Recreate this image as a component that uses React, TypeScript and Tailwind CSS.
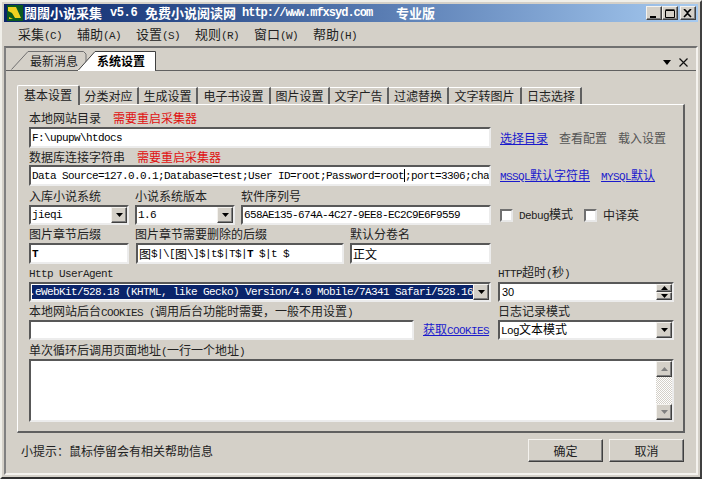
import type { ReactNode } from 'react';

const CJK = "font-['Noto_Sans_CJK_SC','Liberation_Sans',sans-serif]";
const MONO = "font-['Liberation_Mono','Noto_Sans_CJK_SC',monospace]";

/** Half-width Latin text, the 6px advance of the old bitmap font. */
function Lat({ children, className = '' }: { children: ReactNode; className?: string }) {
  return <span className={`${MONO} text-[11px] tracking-[-0.6px] ${className}`}>{children}</span>;
}

function Label({ children, className = '' }: { children: ReactNode; className?: string }) {
  return <div className={`h-4 leading-4 text-[12px] whitespace-nowrap text-[#222] ${className}`}>{children}</div>;
}

/** Sunken Win2k edit box. */
function Field({ children, className = '' }: { children?: ReactNode; className?: string }) {
  return (
    <div
      className={`flex items-center overflow-hidden bg-white border-2 border-t-[#585858] border-l-[#585858] border-r-[#ececec] border-b-[#ececec] pl-[1px] whitespace-nowrap text-[12px] leading-4 text-black ${className}`}
    >
      {children}
    </div>
  );
}

function Raised({ children, className = '' }: { children?: ReactNode; className?: string }) {
  return (
    <div
      className={`flex items-center justify-center bg-[#d4d0c8] border border-t-[#f4f2ee] border-l-[#f4f2ee] border-r-[#404040] border-b-[#404040] shadow-[inset_-1px_-1px_0_#808080] ${className}`}
    >
      {children}
    </div>
  );
}

function Arrow({ up = false, color = '#000' }: { up?: boolean; color?: string }) {
  return (
    <svg width="7" height="4" viewBox="0 0 7 4" className={up ? 'rotate-180' : ''}>
      <path d="M0 0h7L3.5 4z" fill={color} />
    </svg>
  );
}

function Combo({ children, className = '' }: { children?: ReactNode; className?: string }) {
  return (
    <Field className={`justify-between pr-0 ${className}`}>
      <div className="flex-1 min-w-0 overflow-hidden flex items-center">{children}</div>
      <Raised className="w-4 h-4 shrink-0">
        <Arrow />
      </Raised>
    </Field>
  );
}

function Check({ children, className = '' }: { children: ReactNode; className?: string }) {
  return (
    <div className={`flex items-center gap-[6px] text-[12px] whitespace-nowrap text-[#222] ${className}`}>
      <div className="w-[13px] h-[13px] bg-white border-2 border-t-[#707070] border-l-[#707070] border-r-[#e8e8e8] border-b-[#e8e8e8]" />
      {children}
    </div>
  );
}

function CapButton({ kind }: { kind: 'min' | 'max' | 'close' }) {
  return (
    <Raised className="w-4 h-[14px]">
      <svg width="10" height="9" viewBox="0 0 10 9">
        {kind === 'min' && <path d="M1 7h6v2H1z" fill="#000" />}
        {kind === 'max' && <path d="M0.5 1.5h9v7h-9zM0.5 0.8h9" fill="none" stroke="#000" />}
        {kind === 'close' && <path d="M1 0l3.5 3.5L8 0M1 8l3.5-3.5L8 8" fill="none" stroke="#000" strokeWidth="1.6" />}
      </svg>
    </Raised>
  );
}

const MENUS = [
  ['采集', 'C'],
  ['辅助', 'A'],
  ['设置', 'S'],
  ['规则', 'R'],
  ['窗口', 'W'],
  ['帮助', 'H'],
];

const TABS = [
  ['分类对应', 'w-[59px]'],
  ['生成设置', 'w-[59px]'],
  ['电子书设置', 'w-[73px]'],
  ['图片设置', 'w-[59px]'],
  ['文字广告', 'w-[59px]'],
  ['过滤替换', 'w-[60px]'],
  ['文字转图片', 'w-[73px]'],
  ['日志选择', 'w-[60px]'],
];

export default function App() {
  return (
    <div className={`w-[702px] h-[479px] overflow-hidden bg-[#d4d0c8] ${CJK} border-2 border-t-[#f0efe9] border-l-[#f0efe9] border-r-[#404040] border-b-[#303030] p-[2px]`}>
      {/* Title bar */}
      <div className="h-[18px] flex items-center bg-gradient-to-r from-[#0a246a] to-[#a6caf0] pl-[3px] pr-[2px] text-white font-bold text-[13px] whitespace-nowrap">
        <svg width="16" height="16" viewBox="0 0 16 16" className="shrink-0 mr-[1px]">
          <rect width="16" height="16" fill="#0c5a1e" />
          <path d="M1 2h8l5 11H8L5 8 1 6z" fill="#f0d020" />
          <path d="M2 12l4 2H2z" fill="#e8c818" />
        </svg>
        <span className="w-[86px]">闊闊小说采集</span>
        <span className={`${MONO} w-[35px] text-[12px] tracking-[-0.4px]`}>v5.6</span>
        <span className="w-[97px]">免费小说阅读网</span>
        <span className={`${MONO} w-[154px] text-[12px] tracking-[-1px]`}>http://www.mfxsyd.com</span>
        <span>专业版</span>
        <div className="ml-auto flex items-center">
          <CapButton kind="min" />
          <CapButton kind="max" />
          <div className="w-[2px]" />
          <CapButton kind="close" />
        </div>
      </div>

      {/* Menu bar */}
      <div className="h-6 flex items-center pl-[14px] text-[13px] text-[#222]">
        {MENUS.map(([name, key]) => (
          <div key={key} className="w-[59px] whitespace-nowrap">
            {name}
            <Lat>({key})</Lat>
          </div>
        ))}
      </div>

      {/* MDI area */}
      <div className="h-[429px] border-2 border-t-[#707070] border-l-[#808080] border-r-[#f4f2ee] border-b-[#f4f2ee] outline outline-1 outline-[#d4d0c8]">
        {/* Document tabs */}
        <div className="h-[23px] flex items-end border-b border-b-[#606060] pl-[5px] relative">
          <div className="relative w-[67px] h-[19px] text-[12px]">
            <svg width="76" height="19" viewBox="0 0 76 19" className="absolute left-0 top-0">
              <path d="M0.5 18.5L17 0.5H72.5L75 3V15" fill="#d4d0c8" stroke="#707070" />
            </svg>
            <span className="absolute left-[19px] top-[1px] whitespace-nowrap text-[#222]">最新消息</span>
          </div>
          <div className="relative w-[85px] h-[19px] text-[12px] font-bold">
            <svg width="86" height="20" viewBox="0 0 86 20" className="absolute left-0 top-0">
              <path d="M0 19.5L17 0.5H77.5V19.5z" fill="#fff" stroke="#404040" />
              <path d="M0 19.5H77" stroke="#fff" />
            </svg>
            <span className="absolute left-[19px] top-[1px] whitespace-nowrap text-black">系统设置</span>
          </div>
          <div className="absolute right-[8px] top-[10px] flex items-center gap-[8px]">
            <svg width="8" height="5" viewBox="0 0 8 5">
              <path d="M0 0h8L4 5z" fill="#000" />
            </svg>
            <svg width="9" height="9" viewBox="0 0 9 9">
              <path d="M0.5 0.5l8 8M8.5 0.5l-8 8" stroke="#111" strokeWidth="1.2" fill="none" />
            </svg>
          </div>
        </div>

        {/* Tab strip */}
        <div className="h-[33px] pl-[11px] flex items-end text-[12px] text-[#222] relative z-10">
          <div className="w-[63px] h-[20px] -mb-[1px] bg-[#d4d0c8] border-t border-l border-t-white border-l-white border-r-2 border-r-[#606060] rounded-t-[2px] flex items-center justify-center pb-[2px]">
            基本设置
          </div>
          {TABS.map(([name, w]) => (
            <div
              key={name}
              className={`${w} h-[17px] border-t border-t-white border-r-2 border-r-[#606060] flex items-center justify-center whitespace-nowrap`}
            >
              {name}
            </div>
          ))}
        </div>

        {/* Tab page */}
        <div className="ml-[11px] w-[668px] h-[329px] border-t border-l border-t-white border-l-white border-r-2 border-b-2 border-r-[#606060] border-b-[#606060] pl-[11px] pt-[5px]">
          <Label className="mb-[1px]">
            本地网站目录<span className="ml-[12px] text-[#e01010]">需要重启采集器</span>
          </Label>
          <div className="flex items-center h-[21px]">
            <Field className="w-[462px] h-[21px]">
              <Lat>F:\upupw\htdocs</Lat>
            </Field>
            <div className="ml-[9px] flex gap-[11px] text-[12px] whitespace-nowrap">
              <span className="text-[#1a1acc] underline">选择目录</span>
              <span className="text-[#555]">查看配置</span>
              <span className="text-[#555]">载入设置</span>
            </div>
          </div>

          <Label className="mt-[1px]">
            数据库连接字符串<span className="ml-[12px] text-[#e01010]">需要重启采集器</span>
          </Label>
          <div className="flex items-center h-[21px]">
            <Field className="w-[462px] h-[21px]">
              <Lat>Data Source=127.0.0.1;Database=test;User ID=root;Password=root</Lat>
              <span className="w-0 h-[13px] border-l border-l-black" />
              <Lat>;port=3306;charset=utf8</Lat>
            </Field>
            <div className="ml-[9px] flex gap-[11px] text-[12px] whitespace-nowrap text-[#1a1acc] underline">
              <span>
                <Lat>MSSQL</Lat>默认字符串
              </span>
              <span>
                <Lat>MYSQL</Lat>默认
              </span>
            </div>
          </div>

          <div className="flex mt-[2px]">
            <Label className="w-[106px]">入库小说系统</Label>
            <Label className="w-[106px]">小说系统版本</Label>
            <Label>软件序列号</Label>
          </div>
          <div className="flex items-center mt-[1px] h-5">
            <Combo className="w-[100px] h-5">
              <Lat>jieqi</Lat>
            </Combo>
            <Combo className="ml-[6px] w-[100px] h-5">
              <Lat>1.6</Lat>
            </Combo>
            <Field className="ml-[6px] w-[250px] h-5">
              <Lat>658AE135-674A-4C27-9EE8-EC2C9E6F9559</Lat>
            </Field>
            <Check className="ml-[9px] w-[84px]">
              <span>
                <Lat>Debug</Lat>模式
              </span>
            </Check>
            <Check>中译英</Check>
          </div>

          <div className="flex mt-[1px]">
            <Label className="w-[106px]">图片章节后缀</Label>
            <Label className="w-[215px]">图片章节需要删除的后缀</Label>
            <Label>默认分卷名</Label>
          </div>
          <div className="flex items-center mt-[1px] h-[21px]">
            <Field className="w-[100px] h-[21px]">
              <Lat className="font-bold">T</Lat>
            </Field>
            <Field className="ml-[7px] w-[208px] h-[21px]">
              图<Lat>$|\[</Lat>图<Lat>\]$|t$|T$|</Lat>
              <Lat className="font-bold">T</Lat>
              <Lat>{'\u00a0$|t\u00a0$'}</Lat>
            </Field>
            <Field className="ml-[6px] w-[141px] h-[21px]">正文</Field>
          </div>

          <div className="flex">
            <Label className="w-[469px]">
              <Lat>Http UserAgent</Lat>
            </Label>
            <Label>
              <Lat>HTTP</Lat>超时<Lat>(</Lat>秒<Lat>)</Lat>
            </Label>
          </div>
          <div className="flex items-center mt-[2px] h-5">
            <Field className="w-[462px] h-5 pl-0">
              <div className="flex-1 min-w-0 h-[14px] flex justify-end items-center overflow-hidden bg-[#0a246a] text-white">
                <Lat className="shrink-0">.eWebKit/528.18 (KHTML, like Gecko) Version/4.0 Mobile/7A341 Safari/528.16</Lat>
              </div>
              <Raised className="w-4 h-4 shrink-0">
                <Arrow />
              </Raised>
            </Field>
            <Field className="ml-[7px] w-[176px] h-5 pr-0 justify-between">
              <span className="text-[11px] pl-[1px] font-['Liberation_Sans',sans-serif]">30</span>
              <div className="flex flex-col shrink-0">
                <Raised className="w-4 h-2">
                  <Arrow up />
                </Raised>
                <Raised className="w-4 h-2">
                  <Arrow />
                </Raised>
              </div>
            </Field>
          </div>

          <div className="flex mt-[1px]">
            <Label className="w-[469px]">
              本地网站后台<Lat>COOKIES</Lat>
              <span className="ml-[6px]">
                <Lat>(</Lat>调用后台功能时需要，一般不用设置<Lat>)</Lat>
              </span>
            </Label>
            <Label>日志记录模式</Label>
          </div>
          <div className="flex items-center mt-[1px] h-5">
            <Field className="w-[385px] h-5" />
            <span className="ml-[9px] w-[75px] text-[12px] whitespace-nowrap text-[#1a1acc] underline">
              获取<Lat>COOKIES</Lat>
            </span>
            <Combo className="w-[176px] h-5">
              <span className="text-[12px]">
                <Lat>Log</Lat>文本模式
              </span>
            </Combo>
          </div>

          <Label className="mt-[2px]">
            单次循环后调用页面地址<Lat>(</Lat>一行一个地址<Lat>)</Lat>
          </Label>
          <Field className="mt-[1px] w-[645px] h-[63px] items-stretch justify-end pr-0">
            <div className="w-4 flex flex-col justify-between bg-[repeating-conic-gradient(#d4d0c8_0_25%,#ffffff_0_50%)] bg-[length:2px_2px]">
              <Raised className="h-4 w-4">
                <Arrow up color="#808080" />
              </Raised>
              <Raised className="h-4 w-4">
                <Arrow color="#808080" />
              </Raised>
            </div>
          </Field>
        </div>

        {/* Footer */}
        <div className="flex items-center h-[23px] mt-[6px] pl-[15px] pr-[12px] text-[12px] text-[#222]">
          <span>小提示：鼠标停留会有相关帮助信息</span>
          <Raised className="ml-auto w-[75px] h-[23px]">确定</Raised>
          <Raised className="ml-[6px] w-[75px] h-[23px]">取消</Raised>
        </div>
      </div>
    </div>
  );
}
